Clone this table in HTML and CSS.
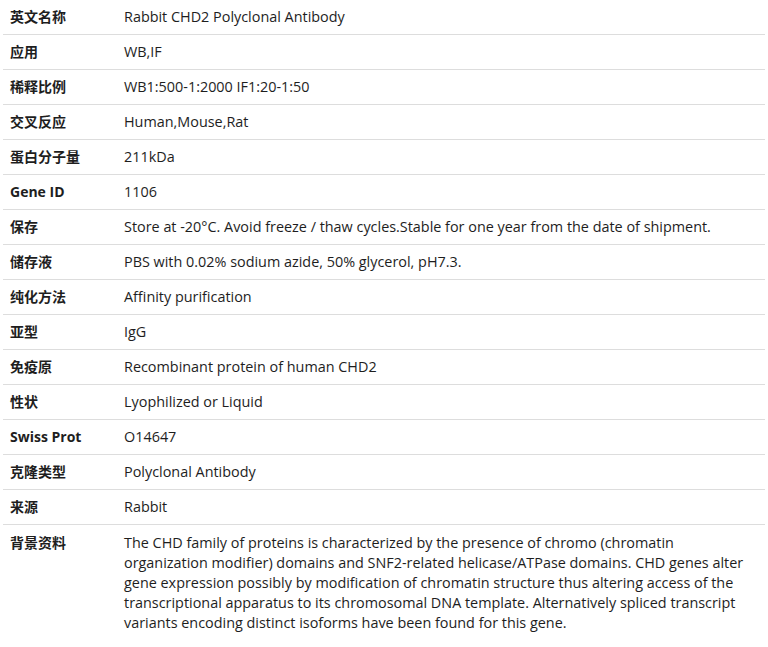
FILE: index.html
```html
<!DOCTYPE html>
<html lang="zh">
<head>
<meta charset="utf-8">
<link rel="stylesheet" href="styles.css">
</head>
<body>
<table class="spec">
<tr><th>英文名称</th><td>Rabbit CHD2 Polyclonal Antibody</td></tr>
<tr><th>应用</th><td>WB,IF</td></tr>
<tr><th>稀释比例</th><td>WB1:500-1:2000 IF1:20-1:50</td></tr>
<tr><th>交叉反应</th><td>Human,Mouse,Rat</td></tr>
<tr><th>蛋白分子量</th><td>211kDa</td></tr>
<tr><th>Gene ID</th><td>1106</td></tr>
<tr><th>保存</th><td>Store at -20°C. Avoid freeze / thaw cycles.Stable for one year from the date of shipment.</td></tr>
<tr><th>储存液</th><td>PBS with 0.02% sodium azide, 50% glycerol, pH7.3.</td></tr>
<tr><th>纯化方法</th><td>Affinity purification</td></tr>
<tr><th>亚型</th><td>IgG</td></tr>
<tr><th>免疫原</th><td>Recombinant protein of human CHD2</td></tr>
<tr><th>性状</th><td>Lyophilized or Liquid</td></tr>
<tr><th>Swiss Prot</th><td>O14647</td></tr>
<tr><th>克隆类型</th><td>Polyclonal Antibody</td></tr>
<tr><th>来源</th><td>Rabbit</td></tr>
<tr class="last"><th>背景资料</th><td>The CHD family of proteins is characterized by the presence of chromo (chromatin organization modifier) domains and SNF2-related helicase/ATPase domains. CHD genes alter gene expression possibly by modification of chromatin structure thus altering access of the transcriptional apparatus to its chromosomal DNA template. Alternatively spliced transcript variants encoding distinct isoforms have been found for this gene.</td></tr>
</table>
</body>
</html>
```
FILE: styles.css
```css
html, body {
  margin: 0;
  padding: 0;
  background: #fff;
}
body {
  padding: 0 3px;
  font-family: "Open Sans", "Noto Sans CJK SC", sans-serif;
  font-size: 14px;
  color: #1e1e1e;
}
.spec {
  width: 762px;
  border-collapse: collapse;
}
.spec th, .spec td {
  padding: 7px;
  line-height: 20px;
  text-align: left;
  vertical-align: top;
  border-bottom: 1px solid #ddd;
}
.spec td {
  font-size: 14.4px;
}
.spec th {
  width: 100px;
  font-weight: bold;
  white-space: nowrap;
}
.spec .last th, .spec .last td {
  border-bottom: none;
  padding-top: 8px;
}
```
